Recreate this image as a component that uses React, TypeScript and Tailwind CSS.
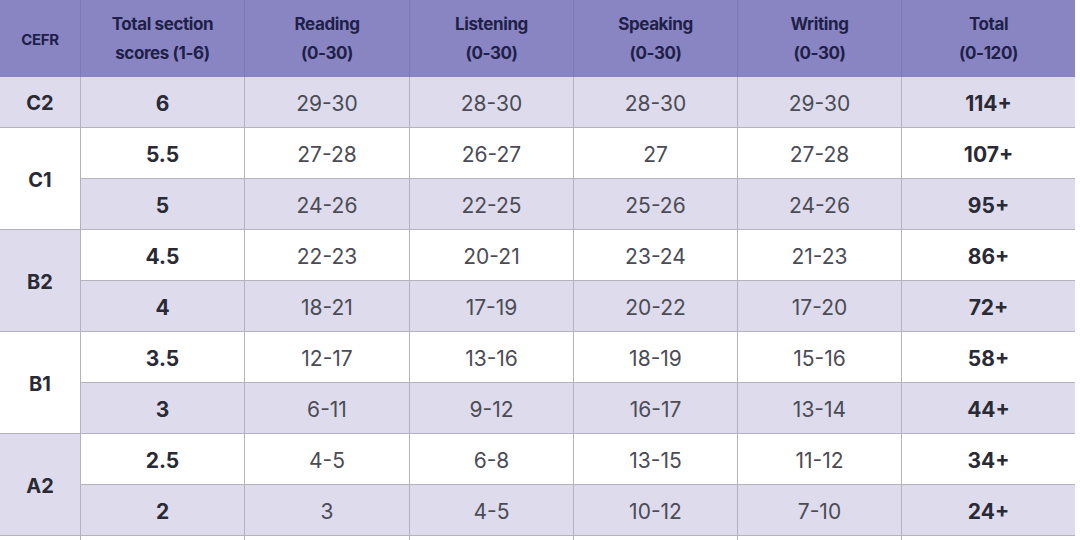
const headers = [
  ["CEFR"],
  ["Total section", "scores (1-6)"],
  ["Reading", "(0-30)"],
  ["Listening", "(0-30)"],
  ["Speaking", "(0-30)"],
  ["Writing", "(0-30)"],
  ["Total", "(0-120)"],
];

const groups = [
  { level: "C2", shade: true, rows: [["6", "29-30", "28-30", "28-30", "29-30", "114+"]] },
  {
    level: "C1",
    shade: false,
    rows: [
      ["5.5", "27-28", "26-27", "27", "27-28", "107+"],
      ["5", "24-26", "22-25", "25-26", "24-26", "95+"],
    ],
  },
  {
    level: "B2",
    shade: true,
    rows: [
      ["4.5", "22-23", "20-21", "23-24", "21-23", "86+"],
      ["4", "18-21", "17-19", "20-22", "17-20", "72+"],
    ],
  },
  {
    level: "B1",
    shade: false,
    rows: [
      ["3.5", "12-17", "13-16", "18-19", "15-16", "58+"],
      ["3", "6-11", "9-12", "16-17", "13-14", "44+"],
    ],
  },
  {
    level: "A2",
    shade: true,
    rows: [
      ["2.5", "4-5", "6-8", "13-15", "11-12", "34+"],
      ["2", "3", "4-5", "10-12", "7-10", "24+"],
    ],
  },
];

export default function App() {
  return (
    <div
      className="w-[1080px] h-[540px] overflow-hidden bg-white"
      style={{ fontFamily: "Inter, 'Open Sans', sans-serif" }}
    >
      <div className="w-[1075px] grid grid-cols-[81px_164px_165px_164px_164px_164px_173px] auto-rows-[51px] grid-rows-[77px]">
        {headers.map((h, i) => (
          <div
            key={i}
            className={`bg-[#8985c3] flex flex-col items-center justify-center pt-[1px] text-[#1f1f48] font-bold leading-[29px] tracking-[-0.4px] ${
              i === 0 ? "text-[15px]" : "text-[17px]"
            } ${i < 6 ? "border-r border-[#7d79b6]" : ""}`}
          >
            {h.map((line) => (
              <span key={line}>{line}</span>
            ))}
          </div>
        ))}

        {groups.map((g) => (
          <Group key={g.level} level={g.level} shade={g.shade} rows={g.rows} />
        ))}

        {[0, 1, 2, 3, 4, 5, 6].map((i) => (
          <div key={i} className={`bg-white ${i < 6 ? "border-r border-[#b3b2bd]" : ""}`} />
        ))}
      </div>
    </div>
  );
}

function Group({ level, shade, rows }: { level: string; shade: boolean; rows: string[][] }) {
  const span = rows.length === 2 ? "row-span-2" : "row-span-1";
  return (
    <>
      <div
        className={`${span} col-start-1 flex items-center justify-center pt-[2px] border-r border-b border-[#b3b2bd] text-[20px] font-bold text-[#2a2a35] ${
          shade ? "bg-[#dddbec]" : "bg-white"
        }`}
      >
        {level}
      </div>
      {rows.map((r, ri) => {
        const light = rows.length === 1 || ri === 1;
        return r.map((v, ci) => (
          <div
            key={`${ri}-${ci}`}
            className={`flex items-center justify-center pt-[3px] border-b border-[#b3b2bd] text-[21px] ${
              ci < 5 ? "border-r" : ""
            } ${light ? "bg-[#dddbec]" : "bg-white"} ${
              ci === 0 || ci === 5 ? "font-bold text-[#2a2a35]" : "font-normal text-[#4b4b55]"
            }`}
          >
            {v}
          </div>
        ));
      })}
    </>
  );
}
